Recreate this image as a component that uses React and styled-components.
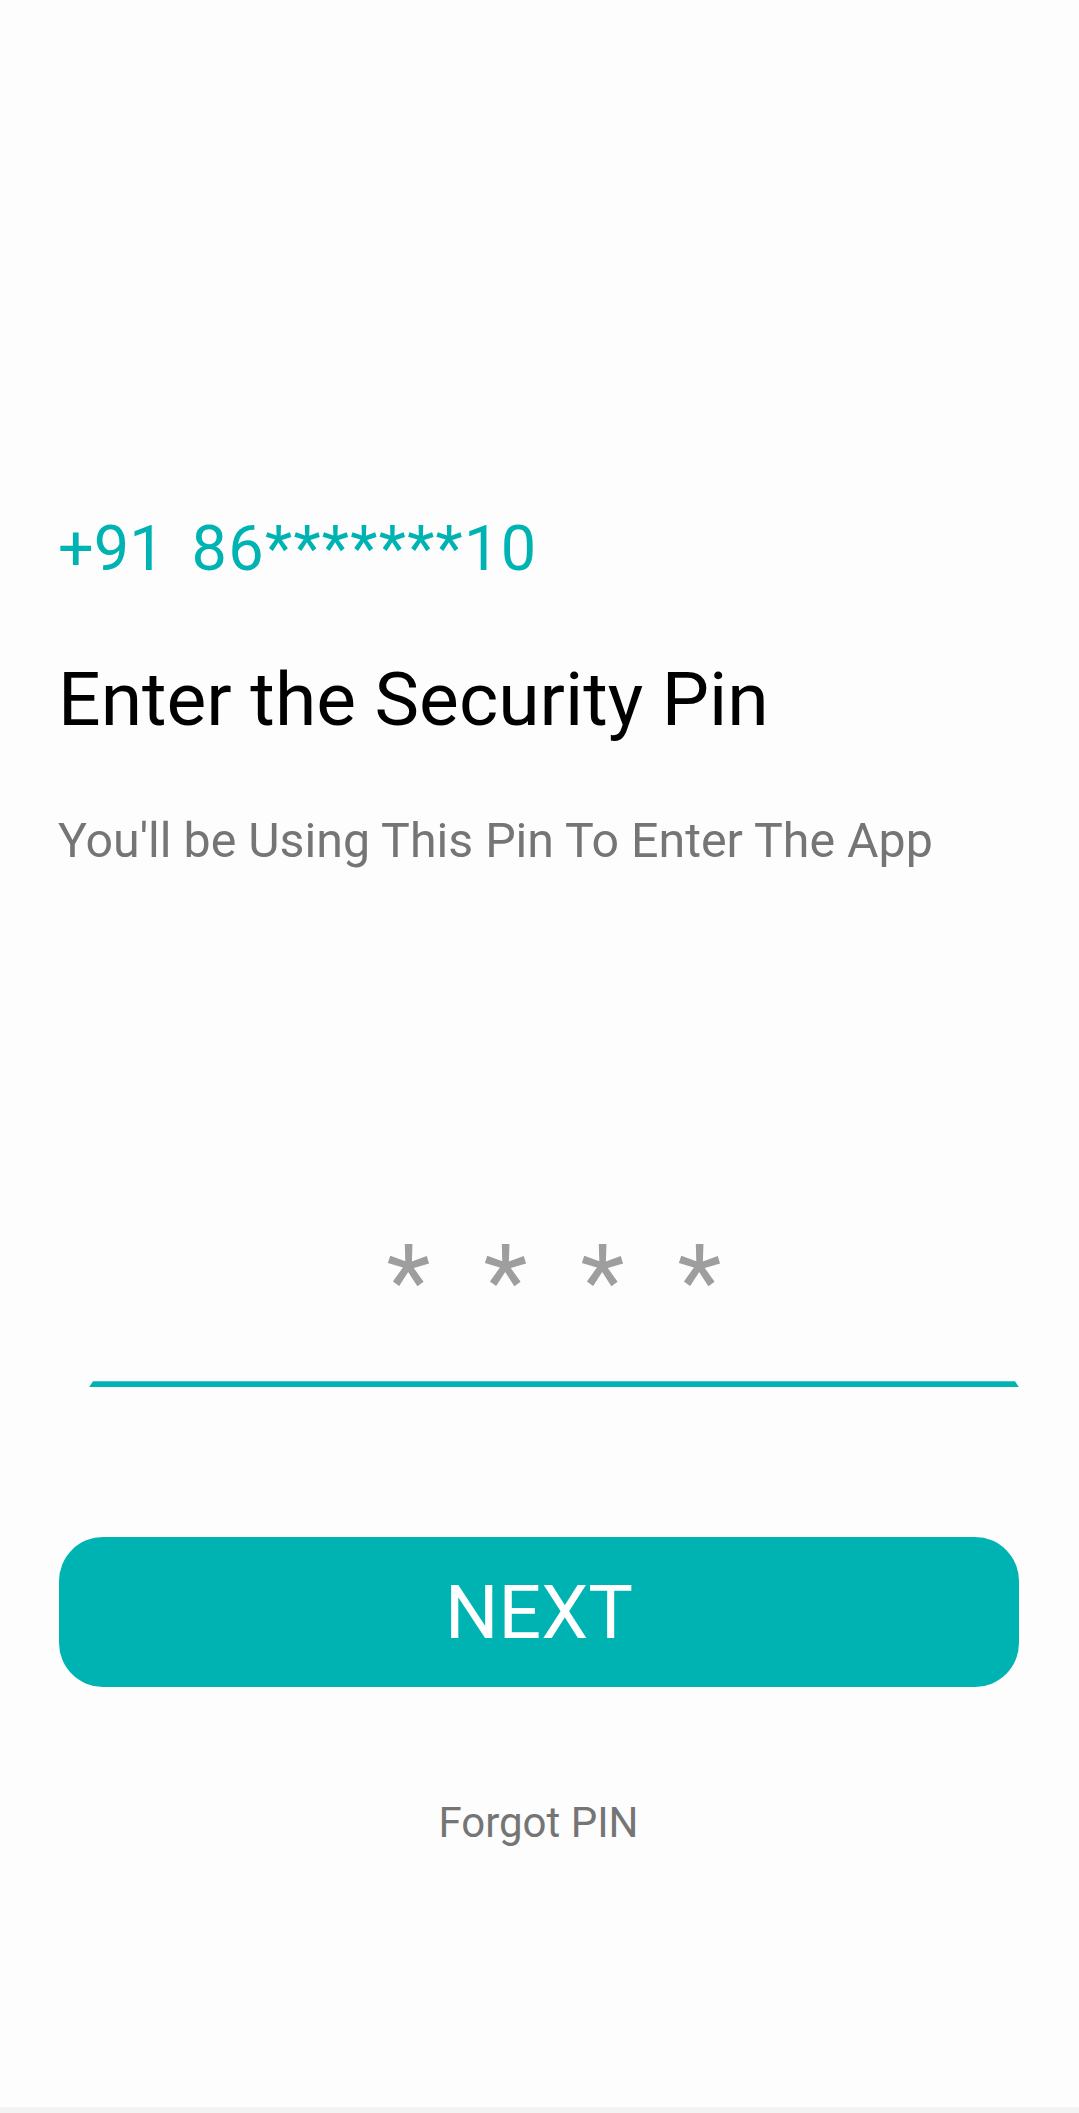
import styled, { createGlobalStyle } from "styled-components";

const GlobalStyle = createGlobalStyle`
  html, body {
    margin: 0;
    padding: 0;
    background: #fdfdfd;
  }
  body {
    font-family: Roboto, "Liberation Sans", sans-serif;
  }
`;

const TEAL = "#00b3b3";

const Screen = styled.div`
  min-height: 2113px;
  display: flex;
  flex-direction: column;
  background: #fdfdfd;
`;

const Content = styled.main`
  display: flex;
  flex-direction: column;
  padding: 517px 60px 0 58px;
`;

const Phone = styled.div`
  display: flex;
  gap: 27px;
  font-size: 63px;
  line-height: 1;
  color: ${TEAL};
`;

const Masked = styled.span`
  letter-spacing: 1.3px;
`;

const Title = styled.h1`
  margin: 82px 0 0;
  font-size: 75px;
  line-height: 1;
  font-weight: 400;
  color: #000;
`;

const Subtitle = styled.p`
  margin: 80px 0 0;
  font-size: 48.3px;
  line-height: 1;
  color: #757575;
`;

const PinField = styled.div`
  margin: 366px 0 0 31px;
  display: flex;
  flex-direction: column;
  align-items: center;
`;

const PinDots = styled.div`
  display: flex;
  justify-content: center;
  height: 102px;
`;

const PinChar = styled.span`
  width: 97px;
  text-align: center;
  font-size: 102px;
  line-height: 1;
  color: #9e9e9e;
`;

const Underline = styled.div`
  align-self: stretch;
  margin-top: 48px;
  height: 6px;
  background: ${TEAL};
  clip-path: polygon(4px 0, calc(100% - 4px) 0, 100% 100%, 0 100%);
`;

const NextButton = styled.button`
  margin-top: 150px;
  margin-left: 1px;
  height: 150px;
  border: none;
  border-radius: 44px;
  background: ${TEAL};
  color: #fff;
  font-family: Roboto, "Liberation Sans", sans-serif;
  font-size: 75px;
  line-height: 1;
  padding: 0;
  cursor: pointer;
`;

const Forgot = styled.a`
  margin-top: 115px;
  align-self: center;
  font-size: 42px;
  line-height: 1;
  color: #757575;
  text-decoration: none;
  cursor: pointer;
`;

const NavEdge = styled.div`
  margin-top: auto;
  height: 6px;
  background: #f3f3f3;
`;

const App = () => {
  const pin = ["*", "*", "*", "*"];
  return (
    <>
      <GlobalStyle />
      <Screen>
        <Content>
          <Phone>
            <span>+91</span>
            <Masked>86*******10</Masked>
          </Phone>
          <Title>Enter the Security Pin</Title>
          <Subtitle>You'll be Using This Pin To Enter The App</Subtitle>
          <PinField>
            <PinDots>
              {pin.map((c, i) => (
                <PinChar key={i}>{c}</PinChar>
              ))}
            </PinDots>
            <Underline />
          </PinField>
          <NextButton>NEXT</NextButton>
          <Forgot>Forgot PIN</Forgot>
        </Content>
        <NavEdge />
      </Screen>
    </>
  );
};

export default App;
